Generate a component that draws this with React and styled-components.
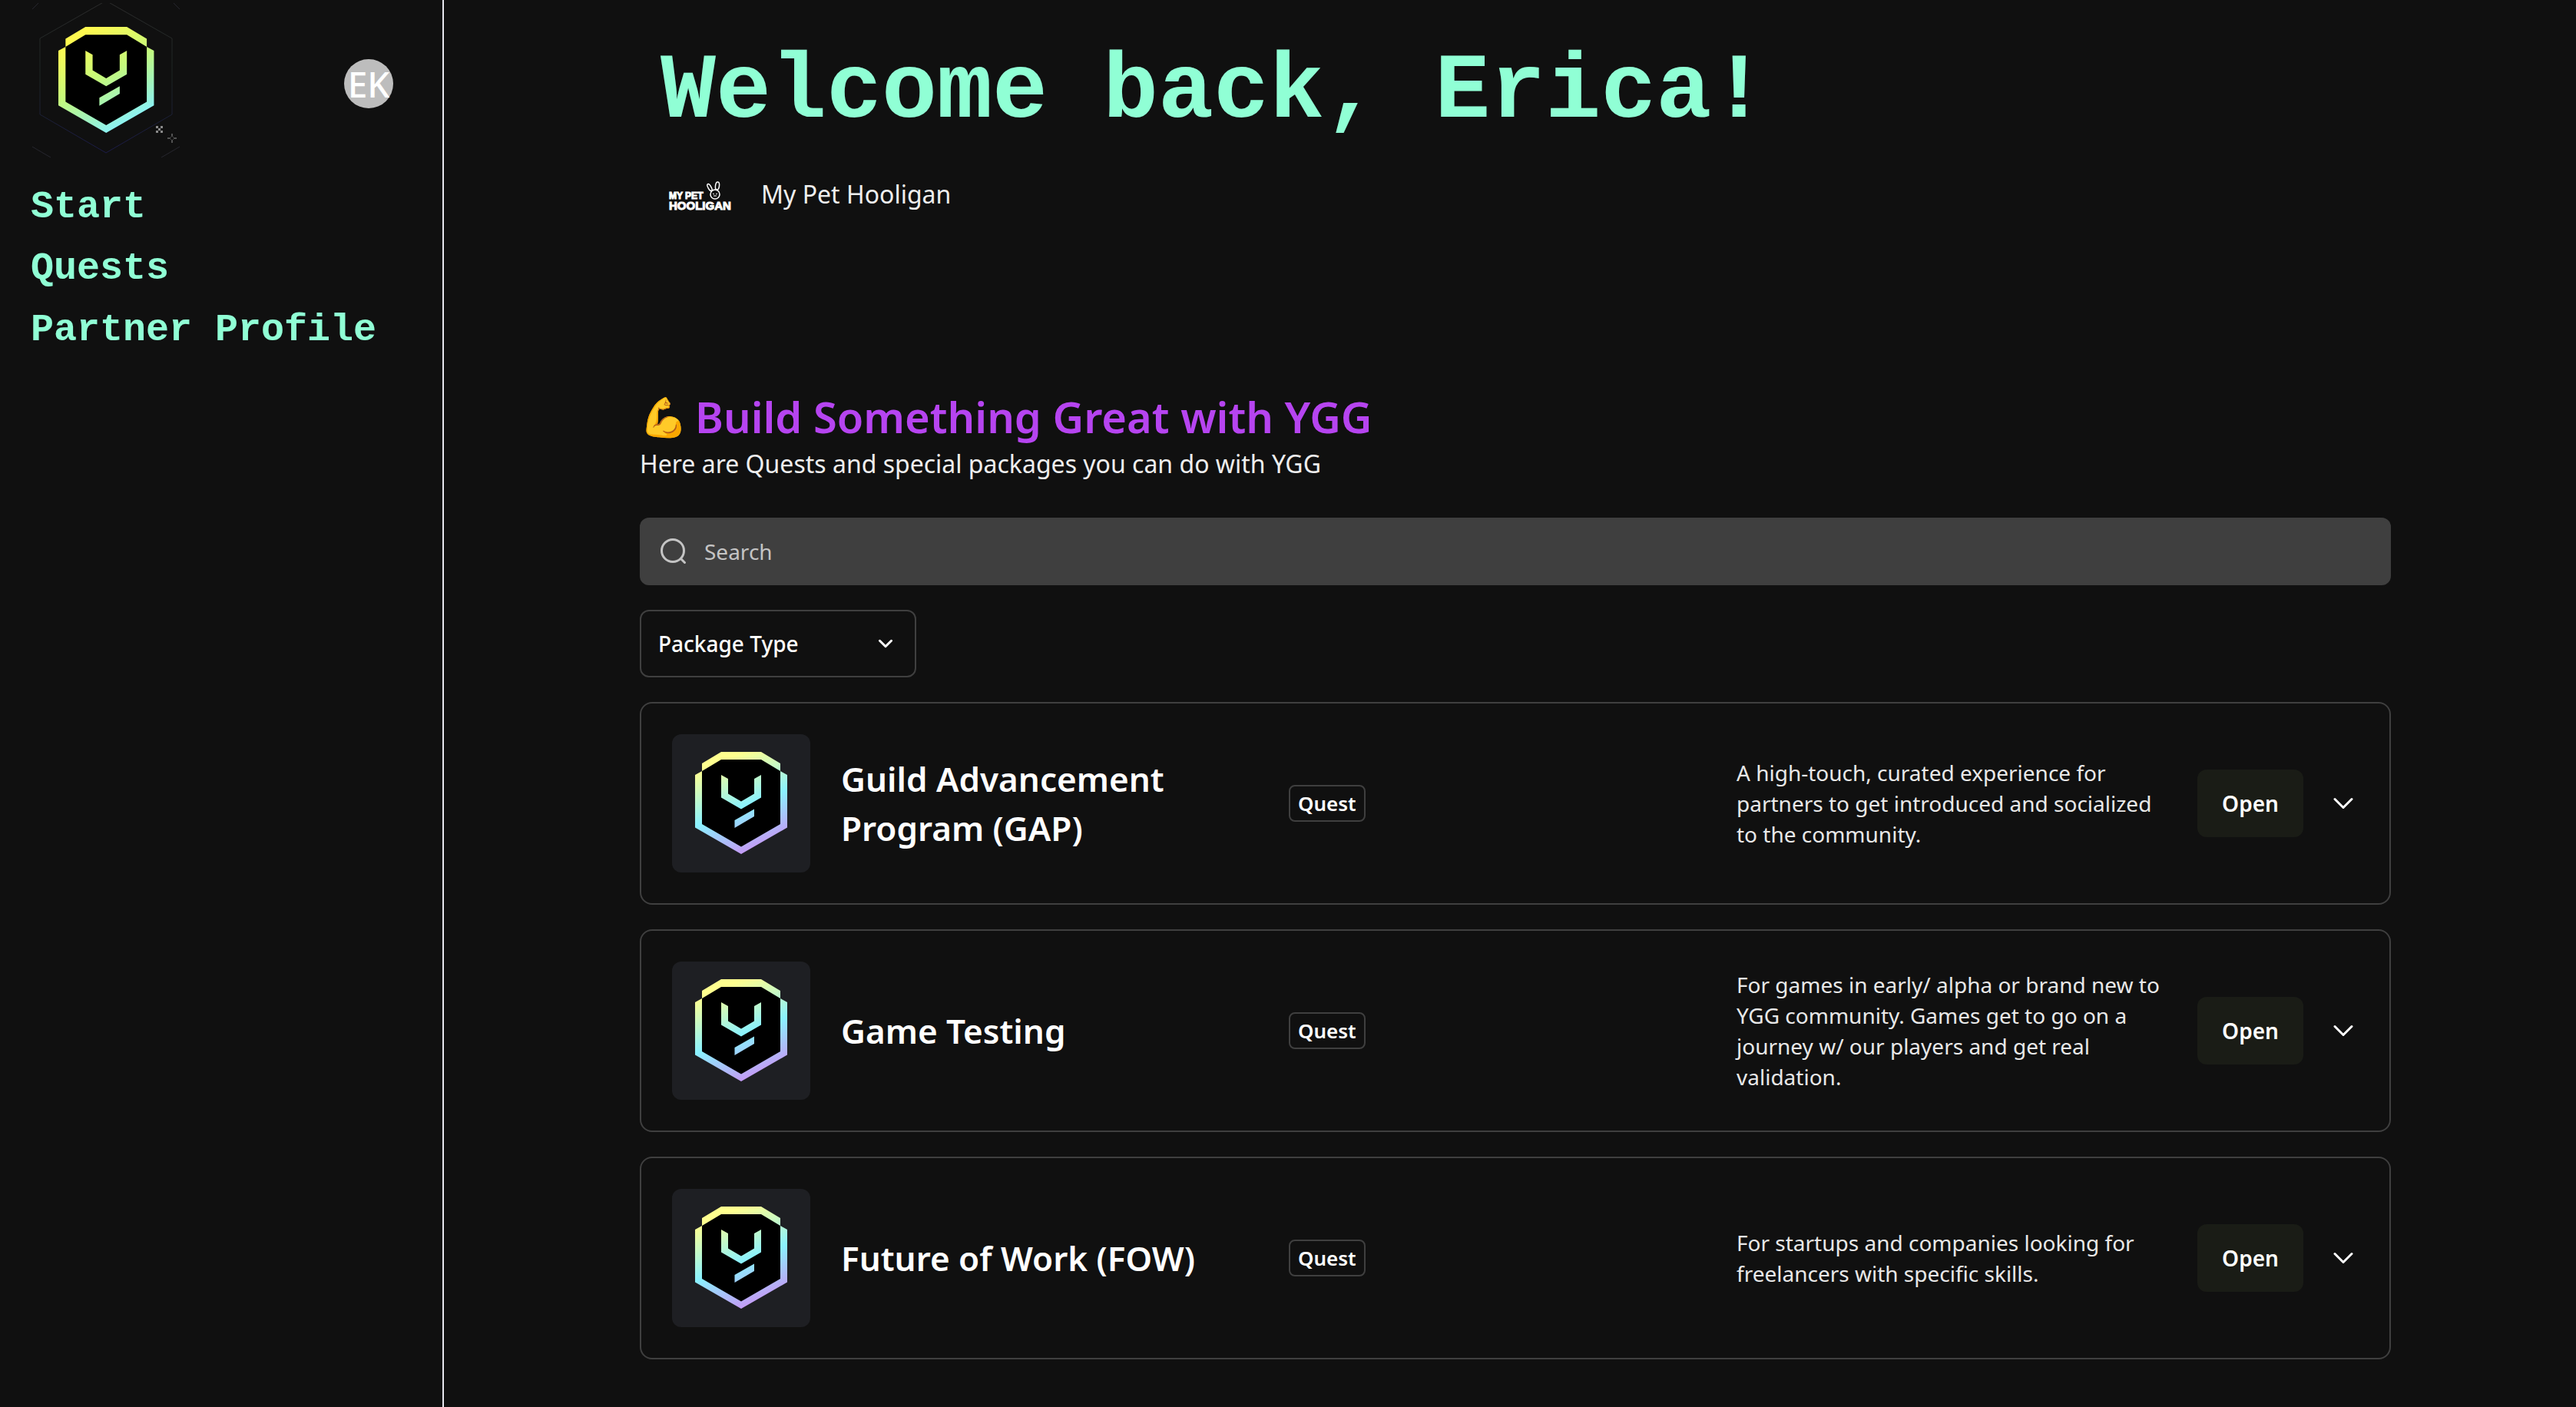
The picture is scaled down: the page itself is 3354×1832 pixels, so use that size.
import React from 'react';
import styled, { createGlobalStyle } from 'styled-components';

const GlobalStyle = createGlobalStyle`
  * { box-sizing: border-box; }
  html, body, #root { min-height: 100%; }
  body {
    margin: 0;
    background: #101010;
    color: #fff;
    font-family: "Noto Sans", "Open Sans", sans-serif;
  }
  h1, h2, h3, p, ul { margin: 0; padding: 0; }
`;

const Page = styled.div`
  display: grid;
  grid-template-columns: 578px minmax(0, 1fr);
  min-height: 100vh;
`;

const Sidebar = styled.aside`
  border-right: 2px solid #e6e6ee;
  padding: 4px 64px 40px 40px;
`;

const SidebarTop = styled.div`
  display: flex;
  align-items: center;
  justify-content: space-between;
  height: 210px;
`;

const SidebarLogo = styled.svg`
  display: block;
  align-self: flex-start;
  width: 196px;
  height: 202px;
`;

const Avatar = styled.button`
  width: 64px;
  height: 64px;
  padding: 0;
  border: 0;
  border-radius: 50%;
  background: #bdbdbd;
  color: #fff;
  font: 500 46px/64px "Noto Sans", sans-serif;
  text-align: center;
`;

const Nav = styled.nav`
  display: flex;
  flex-direction: column;
  gap: 20px;
  padding-top: 26px;
`;

const NavLink = styled.a`
  color: #90ffd5;
  font: 700 50px/60px "Liberation Mono", monospace;
  text-decoration: none;
  white-space: nowrap;
`;

const Main = styled.main`
  padding: 0 241px 40px 255px;
`;

const Title = styled.h1`
  padding: 48px 0 0 27px;
  color: #90ffd5;
  font: 700 120px/144px "Liberation Mono", monospace;
`;

const Partner = styled.div`
  display: flex;
  align-items: center;
  gap: 31px;
  height: 120px;
  padding-left: 27px;
  color: #eee;
  font-size: 32px;
`;

const PartnerLogo = styled.svg`
  width: 100px;
  height: 64px;
`;

const LogoText = styled.text`
  fill: #fff;
  stroke: #fff;
  stroke-width: 1px;
  font-family: "Liberation Sans", sans-serif;
  font-size: ${(p) => p.$size}px;
  font-weight: 700;
`;

const Section = styled.section`
  display: flex;
  flex-direction: column;
  gap: 32px;
  padding-top: 190px;
`;

const SectionHeader = styled.header`
  padding-bottom: 18px;
`;

const SectionTitle = styled.h2`
  display: flex;
  align-items: center;
  gap: 10px;
  color: #b644f0;
  font-size: 56px;
  font-weight: 600;
  line-height: 80px;
`;

const Emoji = styled.span`
  font-size: 50px;
`;

const Lead = styled.p`
  padding-top: 2px;
  color: #eee;
  font-size: 32px;
  line-height: 40px;
`;

const SearchBox = styled.label`
  display: flex;
  align-items: center;
  gap: 18px;
  height: 88px;
  padding: 0 24px;
  border-radius: 12px;
  background: #3f3f3f;
`;

const SearchInput = styled.input`
  flex: 1;
  border: 0;
  outline: 0;
  background: transparent;
  color: #fff;
  font: 400 28px/40px "Noto Sans", sans-serif;
  &::placeholder { color: #c4c4c4; opacity: 1; }
`;

const Filter = styled.div`
  display: grid;
  align-items: center;
  width: 360px;
  & > * { grid-area: 1 / 1; }
  & > svg { justify-self: end; margin-right: 29px; pointer-events: none; }
`;

const Select = styled.select`
  appearance: none;
  height: 88px;
  padding: 0 22px;
  border: 2px solid #3f3f3f;
  border-radius: 12px;
  background: transparent;
  color: #fff;
  font: 500 28px/40px "Noto Sans", sans-serif;
`;

const List = styled.ul`
  display: flex;
  flex-direction: column;
  gap: 32px;
  list-style: none;
`;

const Card = styled.li`
  display: grid;
  grid-template-columns: 180px 1fr 1fr 560px auto;
  gap: 40px;
  align-items: center;
  min-height: 264px;
  padding: 40px;
  border: 2px solid #3f3f3f;
  border-radius: 16px;
`;

const Thumb = styled.div`
  display: grid;
  place-items: center;
  height: 180px;
  border-radius: 12px;
  background: #1e1f23;
`;

const CardTitle = styled.h3`
  font-size: 44px;
  font-weight: 600;
  line-height: 64px;
`;

const Tag = styled.span`
  justify-self: start;
  padding: 0 10px;
  border: 2px solid #3f3f3f;
  border-radius: 8px;
  font-size: 26px;
  font-weight: 600;
  line-height: 44px;
`;

const Description = styled.p`
  color: #e8e8e8;
  font-size: 28px;
  line-height: 40px;
`;

const Actions = styled.div`
  display: flex;
  align-items: center;
  gap: 32px;
`;

const OpenButton = styled.button`
  width: 138px;
  height: 88px;
  padding: 0;
  border: 0;
  border-radius: 12px;
  background: #1a1c16;
  color: #fff;
  font: 600 28px/40px "Noto Sans", sans-serif;
`;

const Toggle = styled.button`
  display: grid;
  place-items: center;
  width: 40px;
  height: 40px;
  padding: 0;
  border: 0;
  background: transparent;
`;

const Chevron = ({ size }) => (
  <svg width={size} height={size} viewBox="0 0 32 32" fill="none" stroke="#fff" strokeWidth={96 / size} strokeLinecap="round" strokeLinejoin="round" aria-hidden="true">
    <path d="M5 10.500l11 11 11-11" />
  </svg>
);

/* Shield emblem on a 120 x 134 grid. */
const Shield = ({ gradient, ...rest }) => (
  <g {...rest}>
    <path d="M34 5H86L111 20V98L60 128 9 98V20z" fill="#000" />
    <g fill={gradient}>
      <path d="M34 0H86L111 15V25L86 10H34L9 25V15z" />
      <path d="M9 25V94L60 123.500 111 94V25L120 30V98.500L60 133 0 98.500V30z" />
      <path d="M34 30L43 35V54.500L60 64.500 77 54.500V35L86 30V59.500L60 74.500 34 59.500z" />
      <path d="M51.500 89L77 74.500V84L51.500 99z" />
    </g>
  </g>
);

const CardEmblem = ({ id }) => (
  <svg width="120" height="134" viewBox="0 0 120 134" aria-hidden="true">
    <defs>
      <linearGradient id={id} gradientUnits="userSpaceOnUse" x1="33" y1="5" x2="81" y2="126">
        <stop offset="0.050" stopColor="#ffff8f" />
        <stop offset="0.560" stopColor="#8af2ff" />
        <stop offset="1" stopColor="#c599f5" />
      </linearGradient>
    </defs>
    <Shield gradient={`url(#${id})`} />
  </svg>
);

const BrandEmblem = () => (
  <SidebarLogo viewBox="40 4 196 202" role="img" aria-label="YGG">
    <defs>
      <linearGradient id="brand" gradientUnits="userSpaceOnUse" x1="24" y1="4" x2="90" y2="120">
        <stop offset="0.050" stopColor="#fff94f" />
        <stop offset="0.500" stopColor="#c4f97c" />
        <stop offset="0.750" stopColor="#a4f4b8" />
        <stop offset="1" stopColor="#8af2f8" />
      </linearGradient>
      <linearGradient id="outline" x1="0" y1="0" x2="0" y2="1">
        <stop offset="0" stopColor="#2c2c2c" />
        <stop offset="0.500" stopColor="#1c2422" />
        <stop offset="1" stopColor="#1b1b48" />
      </linearGradient>
    </defs>
    <path d="M138 1L224 50V149L138 199 52 149V50z" fill="none" stroke="url(#outline)" />
    <path d="M42 12L50 4M226 4L234 12M42 191L66 205M234 191L210 205" fill="none" stroke="#26262e" />
    <Shield gradient="url(#brand)" transform="translate(76 35) scale(1.037)" />
    <path d="M203 164h3v3h3v-3h3v3h-3v3h3v3h-3v-3h-3v3h-3v-3h3v-3h-3z" fill="#8a8a8a" />
    <path d="M224 174v4M224 182v4M218 180h4M226 180h4" stroke="#6a6a6a" strokeWidth="1.500" />
    <path d="M224 177l3 3-3 3-3-3z" fill="none" stroke="#4a4a4a" />
  </SidebarLogo>
);

const packages = [
  { title: 'Guild Advancement Program (GAP)', text: 'A high-touch, curated experience for partners to get introduced and socialized to the community.' },
  { title: 'Game Testing', text: 'For games in early/ alpha or brand new to YGG community. Games get to go on a journey w/ our players and get real validation.' },
  { title: 'Future of Work (FOW)', text: 'For startups and companies looking for freelancers with specific skills.' },
];

export default function App() {
  return (
    <>
      <GlobalStyle />
      <Page>
        <Sidebar>
          <SidebarTop>
            <BrandEmblem />
            <Avatar>EK</Avatar>
          </SidebarTop>
          <Nav>
            <NavLink href="#start">Start</NavLink>
            <NavLink href="#quests">Quests</NavLink>
            <NavLink href="#profile">Partner Profile</NavLink>
          </Nav>
        </Sidebar>
        <Main>
          <Title>Welcome back, Erica!</Title>
          <Partner>
            <PartnerLogo viewBox="0 0 100 64" aria-hidden="true">
              <LogoText x="11" y="39" $size={12}>MY PET</LogoText>
              <LogoText x="11" y="53" $size={15}>HOOLIGAN</LogoText>
              <g fill="none" stroke="#fff" strokeWidth="1.500">
                <circle cx="71" cy="33" r="6" />
                <ellipse cx="64" cy="24" rx="2" ry="5" transform="rotate(-30 64 24)" />
                <ellipse cx="74" cy="22" rx="2.500" ry="5" transform="rotate(8 74 22)" />
                <path d="M68 32l2 1M74 32l-2 1M69 35h4" strokeWidth="1" />
              </g>
            </PartnerLogo>
            My Pet Hooligan
          </Partner>
          <Section>
            <SectionHeader>
              <SectionTitle><Emoji>💪</Emoji>Build Something Great with YGG</SectionTitle>
              <Lead>Here are Quests and special packages you can do with YGG</Lead>
            </SectionHeader>
            <SearchBox>
              <svg width="40" height="40" viewBox="0 0 40 40" fill="none" stroke="#c4c4c4" strokeWidth="3" strokeLinecap="round" aria-hidden="true">
                <circle cx="19" cy="19" r="14.500" />
                <path d="M29.500 29.500l5 5" />
              </svg>
              <SearchInput placeholder="Search" aria-label="Search" />
            </SearchBox>
            <Filter>
              <Select aria-label="Package Type"><option>Package Type</option></Select>
              <Chevron size={22} />
            </Filter>
            <List>
              {packages.map((item, i) => (
                <Card key={item.title}>
                  <Thumb><CardEmblem id={`emblem${i}`} /></Thumb>
                  <CardTitle>{item.title}</CardTitle>
                  <Tag>Quest</Tag>
                  <Description>{item.text}</Description>
                  <Actions>
                    <OpenButton>Open</OpenButton>
                    <Toggle aria-label="Show details"><Chevron size={32} /></Toggle>
                  </Actions>
                </Card>
              ))}
            </List>
          </Section>
        </Main>
      </Page>
    </>
  );
}
